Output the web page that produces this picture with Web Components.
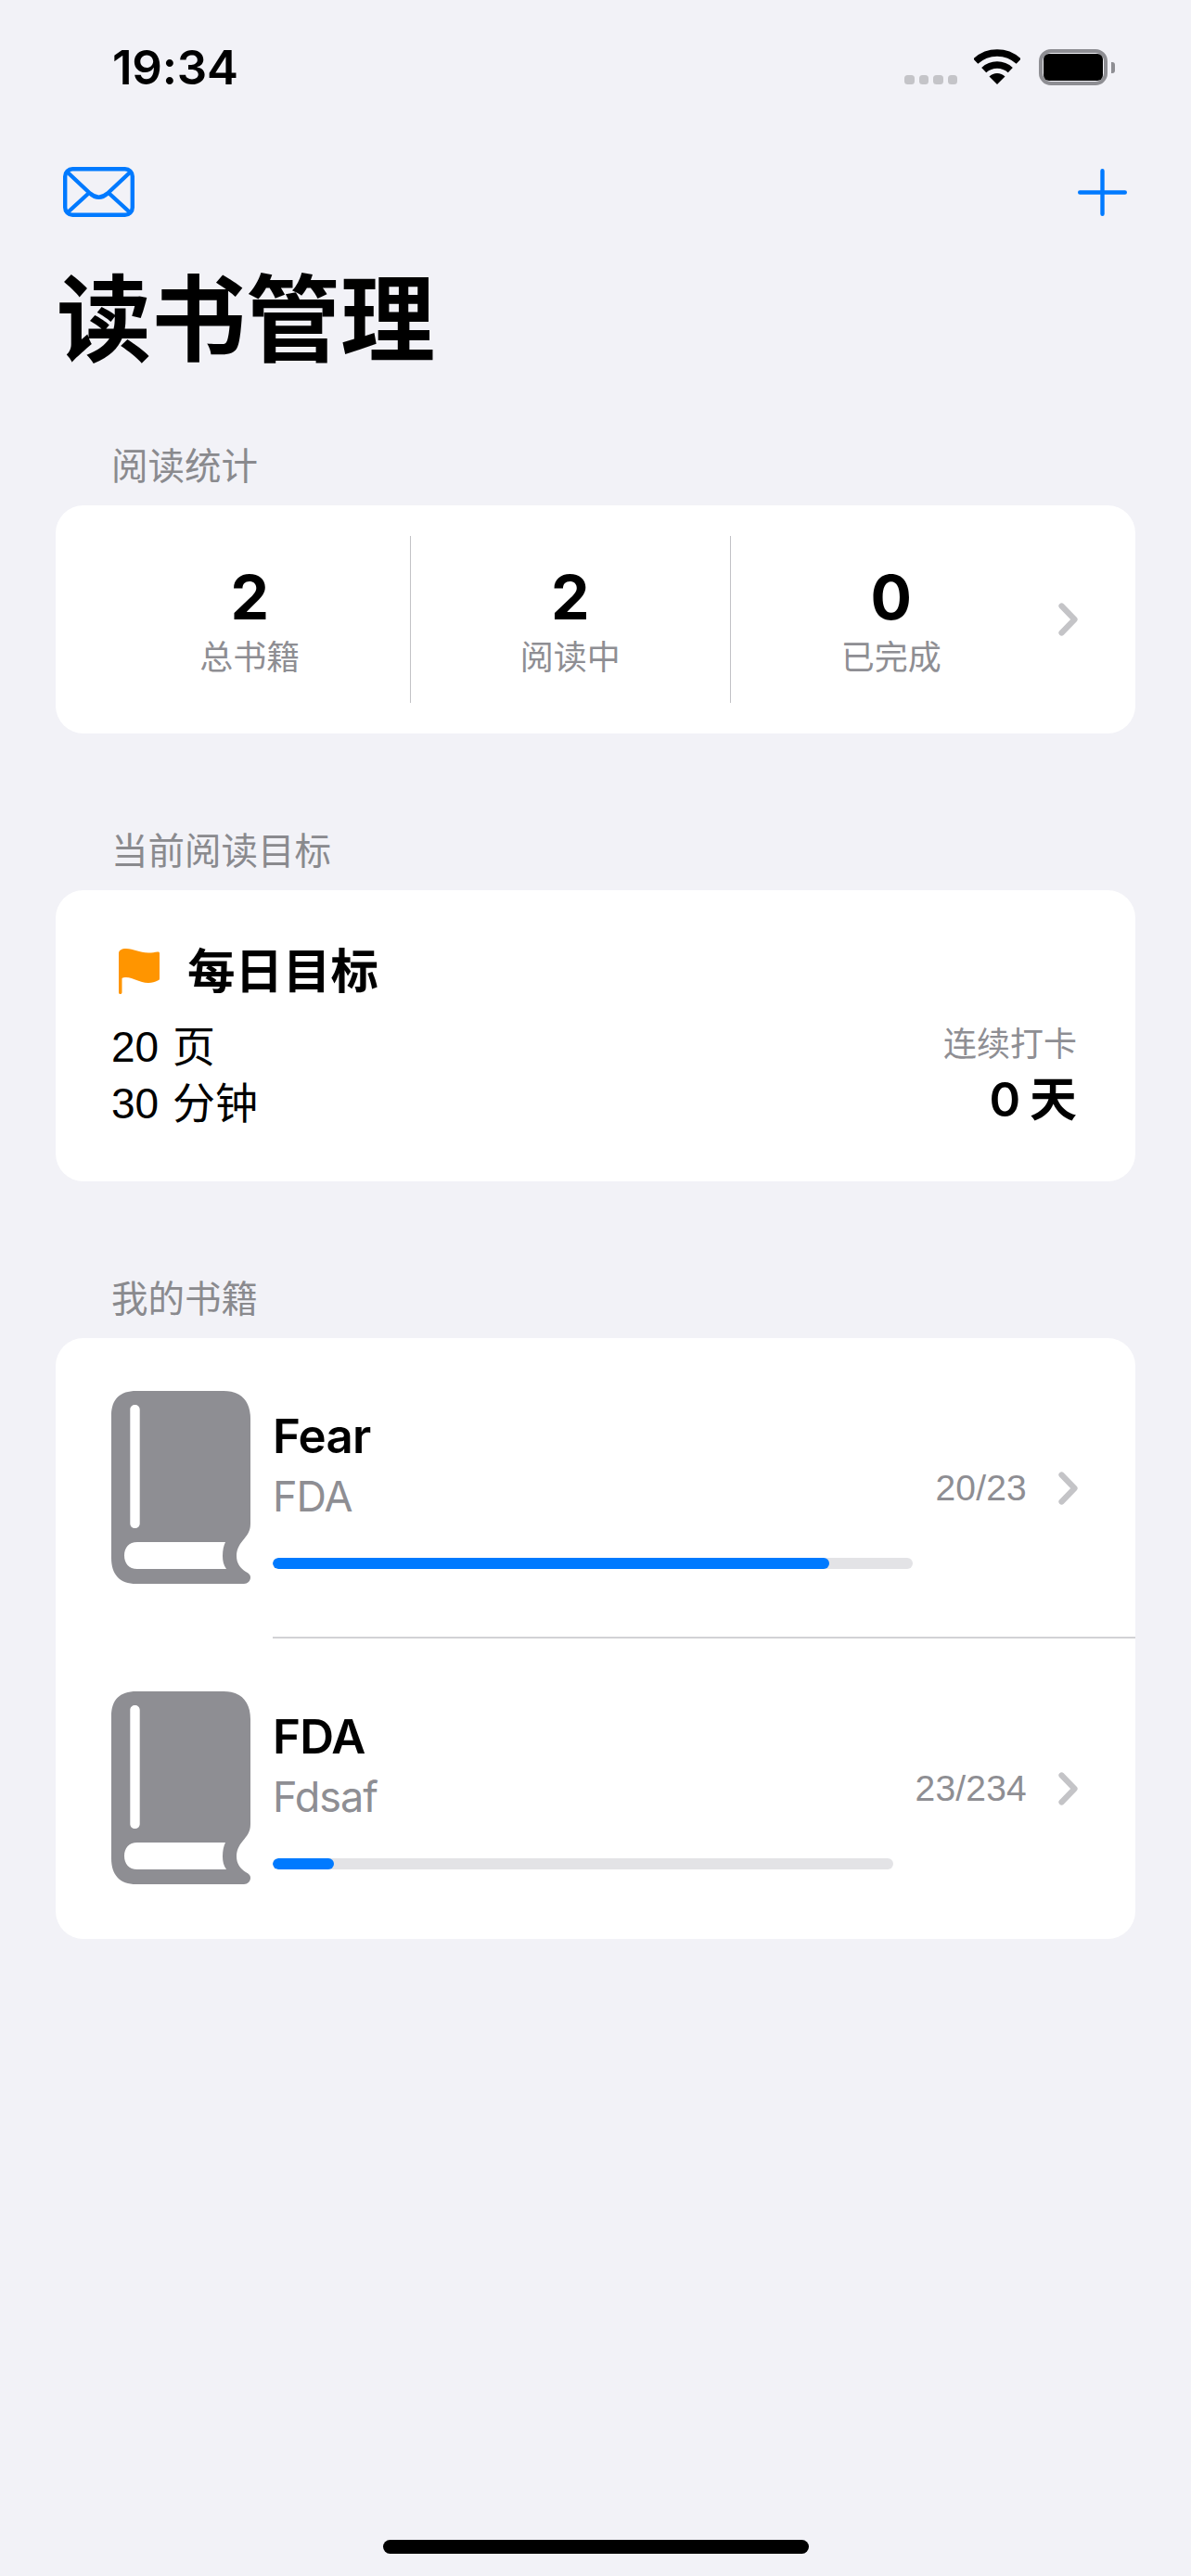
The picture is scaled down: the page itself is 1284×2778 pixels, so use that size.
<!DOCTYPE html>
<html lang="zh-CN"><head><meta charset="utf-8"><title>读书管理</title>
<style>
html,body{margin:0;padding:0;background:#f2f2f7}
body{font-family:Inter,"Noto Sans CJK SC",sans-serif;color:#000}
app-shell{height:2778px}
</style></head><body>
<app-shell>
  <status-bar time="19:34"></status-bar>
  <nav-bar></nav-bar>
  <large-title>读书管理</large-title>
  <list-section label="阅读统计" style="margin-top:72px">
    <stats-card>
      <stat-cell value="2" label="总书籍"></stat-cell>
      <stat-cell value="2" label="阅读中"></stat-cell>
      <stat-cell value="0" label="已完成"></stat-cell>
    </stats-card>
  </list-section>
  <list-section label="当前阅读目标" style="margin-top:100px">
    <goal-card></goal-card>
  </list-section>
  <list-section label="我的书籍" style="margin-top:100px">
    <book-row name="Fear" author="FDA" progress="20/23" pct="86.9"></book-row>
    <book-row name="FDA" author="Fdsaf" progress="23/234" pct="9.83" last></book-row>
  </list-section>
  <home-indicator></home-indicator>
</app-shell>
<script>
const chevron = `<svg width="21" height="36" viewBox="0 0 21 36" fill="none"><path d="M3.500 3.500L17.500 18L3.500 32.500" stroke="#c4c4c7" stroke-width="6.200" stroke-linecap="round" stroke-linejoin="round"/></svg>`;
function def(name, render, css){
  customElements.define(name, class extends HTMLElement{
    connectedCallback(){
      if(this.shadowRoot) return;
      const r=this.attachShadow({mode:'open'});
      r.innerHTML=`<style>${css}</style>`+render(this);
    }
  });
}
def('app-shell',()=>`<slot></slot>`,`:host{display:flex;flex-direction:column;box-sizing:border-box;width:1284px;background:#f2f2f7;position:relative}`);
def('status-bar',el=>`<span class="t">${el.getAttribute('time')}</span>
<div class="r">
 <div class="dots"><i></i><i></i><i></i><i></i></div>
 <svg class="wifi" width="50" height="38" viewBox="0 0 50 38" fill="none"><path d="M1.800 13.100A34 34 0 0 1 48.200 13.100M10.700 22.600A21 21 0 0 1 39.300 22.600" stroke="#000" stroke-width="7.400"/><path d="M25 38L16.500 29.600A12 12 0 0 1 33.500 29.600Z" fill="#000"/></svg>
 <div class="bat"><div class="fill"></div></div><div class="nub"></div>
</div>`,`:host{display:flex;justify-content:space-between;height:150px;box-sizing:border-box;padding:0 82px 0 121px;flex:none}
.t{font-size:51px;font-weight:600;line-height:62px;margin-top:42px;letter-spacing:-.2px}
.r{display:flex;align-items:flex-start;padding-top:53px}
.dots{display:flex;gap:5px;margin-top:28px;margin-right:18px;margin-left:-1px}
.dots i{width:10.500px;height:10px;border-radius:3.500px;background:#c4c4c8}
.wifi{margin-right:20px}
.bat{box-sizing:border-box;width:74px;height:39px;border:4px solid #8e8e93;border-radius:13px;padding:1px}
.fill{height:100%;background:#000;border-radius:6px}
.nub{width:4px;height:12px;margin:14px 0 0 4px;background:#8e8e93;border-radius:0 3px 3px 0}`);
def('nav-bar',()=>`<svg width="77" height="54" viewBox="0 0 77 54" fill="none" stroke="#007aff" stroke-width="4.400" stroke-linecap="round" stroke-linejoin="round"><rect x="2.200" y="2.200" width="72.600" height="49.600" rx="8"/><path d="M5 6L29 28.500Q38.500 37 48 28.500L72 6M5 49L28 28M72 49L49 28"/></svg>
<svg width="53" height="51" viewBox="0 0 53 51" fill="none" stroke="#007aff" stroke-width="4.400" stroke-linecap="round"><path d="M26.500 2.200V48.800M2.200 25.500H50.800"/></svg>`,
`:host{display:flex;justify-content:space-between;align-items:center;height:114px;padding:0 69px 0 68px;flex:none}svg{display:block}`);
def('large-title',()=>`<slot></slot>`,`:host{display:block;font-size:102px;font-weight:700;line-height:122px;margin-top:20px;margin-bottom:-2px;padding-left:61px;flex:none}`);
def('list-section',el=>`<div class="h">${el.getAttribute('label')}</div><div class="c"><slot></slot></div>`,
`:host{display:block;flex:none}.h{font-size:39.500px;line-height:54px;color:#8a8a8e;padding-left:120px;margin-bottom:15px}
.c{margin:0 60px;background:#fff;border-radius:30px;overflow:hidden}`);
def('stats-card',()=>`<div class="g"><slot></slot></div><div class="ch">${chevron}</div>`,
`:host{display:flex;align-items:center;height:246px;padding-left:37px;padding-right:62px}
.g{display:grid;grid-template-columns:repeat(3,345.5px);width:1036.5px;height:180px}
.ch{margin-left:7px;height:36px}svg{display:block}
::slotted(stat-cell:not(:last-child)){border-right:1.500px solid #c2c2c6}`);
def('stat-cell',el=>`<div class="v">${el.getAttribute('value')}</div><div class="l">${el.getAttribute('label')}</div>`,
`:host{display:flex;flex-direction:column;align-items:center;box-sizing:border-box;padding-top:30px}
.v{font-size:66px;font-weight:700;line-height:72px}.l{font-size:36px;line-height:46px;color:#8e8e93;margin-top:6px}`);
def('goal-card',()=>`<div class="head"><svg width="44" height="49" viewBox="0 0 44 49" fill="#ff9500"><path d="M0 5C0 2 3 0 8 0C16 0 22 4.500 32 4.500C36 4.500 39 4 42 3.500C43.300 3.300 44 4 44 5V32C44 33.500 43.500 34 42 34.500C39 36 36 37 32 37C22 37 16 31 8 31C6 31 4.500 31.300 3.500 32V47.200C3.500 48.300 2.700 49 1.700 49C.7 49 0 48.300 0 47.200Z"/></svg><span>每日目标</span></div>
<div class="row"><div class="left"><div>20 页</div><div>30 分钟</div></div><div class="right"><div class="k">连续打卡</div><div class="n">0 天</div></div></div>`,
`:host{display:block;height:314px;box-sizing:border-box;padding:63px 63px 0 61px}
.head{display:flex;align-items:center;gap:30px;height:49px;padding-left:7px;font-size:51.500px;font-weight:700;line-height:49px}svg{flex:none;display:block}
.row{display:flex;justify-content:space-between;margin-top:27px}
.left{font-family:"Liberation Sans","Noto Sans CJK SC",sans-serif;font-size:46px;line-height:60.500px;word-spacing:2px;margin-left:-1px}
.right{text-align:right;padding-top:2px}.k{font-size:36px;line-height:50px;color:#8e8e93}.n{font-size:51px;font-weight:600;line-height:60px;margin-top:5px;word-spacing:-3px}`);
def('book-row',el=>`<svg class="b" width="150" height="208" viewBox="0 0 150 208" fill-rule="evenodd"><path fill="#8e8e93" d="M27 0H121C140 0 150 11 150 30V143C150 152 146 156 142 161C137 167 135 172 135 178C135 186 139 191 145 195C149 197 150 199 150 201C150 205 147 208 143 208H27C9 208 0 198 0 180V27C0 9 9 0 27 0ZM25.500 15C22.700 15 20.300 17 20.300 20V143C20.300 146 22.700 148 25.500 148C28.300 148 30.700 146 30.700 143V20C30.700 17 28.300 15 25.500 15ZM28 163C19 163 14 169 14 177.500C14 186 19 192 28 192H124C121 188 120 183 120 178C120 172 121 167 123 163Z"/></svg>
<div class="m"><div class="tx"><div class="n">${el.getAttribute('name')}</div><div class="a">${el.getAttribute('author')}</div></div>
<div class="bar"><div class="f" style="width:${el.getAttribute('pct')}%"></div></div></div>
<div class="p">${el.getAttribute('progress')}</div><div class="ch">${chevron}</div>`,
`:host{display:flex;align-items:center;height:324px;box-sizing:border-box;padding-left:60px;padding-right:62px;position:relative}
:host(:not([last]))::after{content:"";position:absolute;left:234px;right:0;bottom:0;height:2px;background:#d2d2d5}
.b{flex:none;display:block;margin-bottom:2px}
.m{flex:1;min-width:0;margin-left:24px;align-self:flex-start}
.tx{padding-top:76px}.n{font-size:51px;font-weight:600;line-height:60px;letter-spacing:-.8px}.a{font-size:45px;line-height:56px;color:#8e8e93;margin-top:7px;letter-spacing:-1px}
.bar{height:12px;border-radius:6px;background:#e3e3e6;margin-top:38px;overflow:hidden}
.f{height:100%;background:#007aff;border-radius:6px}
.p{font-family:"Liberation Sans",sans-serif;font-size:39px;color:#8e8e93;margin-left:24px;line-height:50px;letter-spacing:.2px}
.ch{margin-left:34px;height:36px}svg{display:block}`);
def('home-indicator',()=>`<div></div>`,`:host{display:flex;justify-content:center;margin-top:auto;padding-bottom:24px}div{width:459px;height:15px;border-radius:8px;background:#000}`);
</script>
</body></html>
